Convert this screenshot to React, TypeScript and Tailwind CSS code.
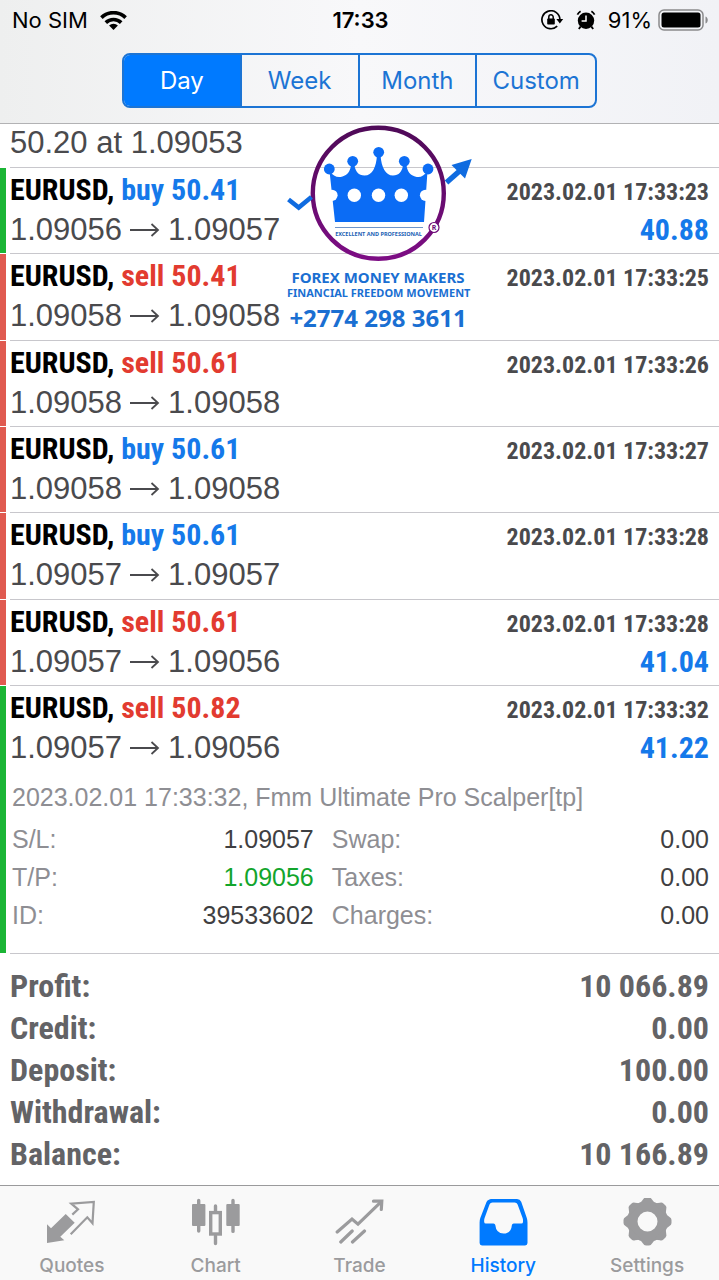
import React, { useState } from 'react'
import clsx from 'clsx'

type Side = 'buy' | 'sell'

interface Deal {
  id: number
  side: Side
  volume: string
  open: string
  close: string
  time: string
  profit?: string
  bar: 'green' | 'red'
}

const deals: Deal[] = [
  { id: 1, side: 'buy', volume: '50.41', open: '1.09056', close: '1.09057', time: '2023.02.01 17:33:23', profit: '40.88', bar: 'green' },
  { id: 2, side: 'sell', volume: '50.41', open: '1.09058', close: '1.09058', time: '2023.02.01 17:33:25', bar: 'red' },
  { id: 3, side: 'sell', volume: '50.61', open: '1.09058', close: '1.09058', time: '2023.02.01 17:33:26', bar: 'red' },
  { id: 4, side: 'buy', volume: '50.61', open: '1.09058', close: '1.09058', time: '2023.02.01 17:33:27', bar: 'red' },
  { id: 5, side: 'buy', volume: '50.61', open: '1.09057', close: '1.09057', time: '2023.02.01 17:33:28', bar: 'red' },
  { id: 6, side: 'sell', volume: '50.61', open: '1.09057', close: '1.09056', time: '2023.02.01 17:33:28', profit: '41.04', bar: 'red' },
  { id: 7, side: 'sell', volume: '50.82', open: '1.09057', close: '1.09056', time: '2023.02.01 17:33:32', profit: '41.22', bar: 'green' },
]

const summary = [
  ['Profit:', '10 066.89'],
  ['Credit:', '0.00'],
  ['Deposit:', '100.00'],
  ['Withdrawal:', '0.00'],
  ['Balance:', '10 166.89'],
]

const periods = ['Day', 'Week', 'Month', 'Custom']

const StatusBar = () => (
  <div className="grid h-10 grid-cols-[1fr_auto_1fr] items-center pr-2.5 pl-3 text-[22px] text-black">
    <div className="flex items-center gap-3">
      <span>No SIM</span>
      <svg width="27" height="19" viewBox="0 0 27 19" fill="none" stroke="#000" strokeWidth="3.6">
        <path d="M1.4 6.6a17.2 17.2 0 0 1 24.2 0" />
        <path d="M5.8 11.600a11 11 0 0 1 15.4 0" />
        <path d="M13.5 19l-4.4-4.4a6.2 6.2 0 0 1 8.8 0z" fill="#000" stroke="none" />
      </svg>
    </div>
    <span className="font-semibold">17:33</span>
    <div className="flex items-center justify-end">
      <svg className="mr-3" width="23" height="20" viewBox="0 0 23 20" fill="none" stroke="#000" strokeWidth="1.7">
        <path d="M16.2 16.2A9 9 0 1 1 18.9 9.2" />
        <path d="M15.4 9h6.8l-3.4 4.4z" fill="#000" stroke="none" />
        <rect x="6.2" y="8.6" width="7.6" height="6" rx="0.8" fill="#000" stroke="none" />
        <path d="M7.8 9V7a2.2 2.2 0 0 1 4.4 0v2" strokeWidth="1.5" />
      </svg>
      <svg className="mr-3" width="20" height="20" viewBox="0 0 20 20" fill="none">
        <circle cx="10" cy="10.8" r="8.2" fill="#000" />
        <path d="M1.4 4.600A10 10 0 0 1 4.600 1.2M15.4 1.2a10 10 0 0 1 3.200 3.4M4.600 16.6L2.8 19M15.4 16.6l1.8 2.4" stroke="#000" strokeWidth="1.800" />
        <path d="M10 5.4v5.6H5.6" stroke="#fff" strokeWidth="1.5" />
      </svg>
      <span className="mr-1.5">91%</span>
      <svg width="51" height="22" viewBox="0 0 51 22" fill="none">
        <rect x="1" y="1" width="44" height="20" rx="5" stroke="#8a8a8c" strokeWidth="1.5" />
        <rect x="3.5" y="3.5" width="39" height="15" rx="2.5" fill="#000" />
        <path d="M47.5 7.5c3 1 3 6 0 7z" fill="#8a8a8c" />
      </svg>
    </div>
  </div>
)

const Arrow = () => (
  <svg width="30" height="14" viewBox="0 0 30 14" fill="none" stroke="#4a4a4d" strokeWidth="1.8">
    <path d="M0 7h28M21.5 1l6.5 6-6.5 6" />
  </svg>
)

const DealRow = ({ deal, children }: { deal: Deal; children?: React.ReactNode }) => (
  <li className={clsx('flex min-h-[86px]', !children && 'grow')}>
    <div className={clsx('mb-px w-1.5 shrink-0', deal.bar === 'green' ? 'bg-[#1bb535]' : 'bg-[#e05a50]')} />
    <div className="ml-1 grow border-b border-[#c8c7cc] pt-0.5 pr-2.5">
      <div className="flex h-10 items-baseline justify-between font-['Roboto_Condensed','Roboto',sans-serif] leading-10 font-bold">
        <span className="text-[30px] text-black">
          EURUSD,{' '}
          <span className={deal.side === 'buy' ? 'text-[#1579ea]' : 'text-[#e23b30]'}>
            {deal.side} {deal.volume}
          </span>
        </span>
        <time className="text-[24px] text-[#4a4a4d]">{deal.time}</time>
      </div>
      <div className="flex h-10 items-baseline justify-between leading-10">
        <span className="flex items-center gap-2 text-[31px] text-[#4a4a4d]">
          {deal.open}
          <Arrow />
          {deal.close}
        </span>
        {deal.profit && (
          <span className="font-['Roboto_Condensed','Roboto',sans-serif] text-[30px] font-bold text-[#1579ea]">{deal.profit}</span>
        )}
      </div>
      {children}
    </div>
  </li>
)

const Detail = ({ label, value, green }: { label: string; value: string; green?: boolean }) => (
  <div className="flex justify-between">
    <dt className="text-[#8e8e93]">{label}</dt>
    <dd className={green ? 'text-[#12a52c]' : 'text-[#3f3f42]'}>{value}</dd>
  </div>
)

const Watermark = () => (
  <div className="pointer-events-none absolute top-0 left-[287px] w-[182px] text-center font-['Noto_Sans',sans-serif] font-bold whitespace-nowrap text-[#1a6fd2]">
    <svg className="overflow-visible" width="182" height="144" viewBox="0 0 182 144" fill="none">
      <defs>
        <linearGradient id="ring" x1="0" y1="0" x2="0" y2="1">
          <stop offset="0" stopColor="#4f0a58" />
          <stop offset="1" stopColor="#7d0d84" />
        </linearGradient>
      </defs>
      <circle cx="91.3" cy="69.3" r="65.5" stroke="url(#ring)" strokeWidth="4.4" />
      <path d="M1.5 75.5l10.2 8L24.5 73" stroke="#0f6be0" strokeWidth="4.6" />
      <path d="M159.5 58.5L176 44" stroke="#0f6be0" strokeWidth="5.4" />
      <path d="M184.7 35l-20.2 6 13.5 13.4z" fill="#0f6be0" />
      <g fill="#0b6cf5">
        <circle cx="42.3" cy="45" r="5.4" />
        <circle cx="65.7" cy="37.3" r="5.4" />
        <circle cx="91.7" cy="28.3" r="5.4" />
        <circle cx="117.3" cy="37.3" r="5.4" />
        <circle cx="141" cy="45" r="5.4" />
        <path d="M42.5 47c4 5.5 8 7 13 5.5 5-1.500 7.5-5 8.5-11h3.5c1 6 4 10 10 10 8 0 11.500-8 12.500-20h3.500c1 12 5 20 12.500 20 6 0 9-4 10-10h3.500c1 6 3.5 9.5 8.5 11 5 1.5 8.5 0 12.500-5.500L137 98H48z" />
      </g>
      <g fill="#fff">
        <circle cx="45" cy="71.3" r="5.6" />
        <circle cx="67.3" cy="71.3" r="6.7" />
        <circle cx="91.5" cy="71.3" r="6.7" />
        <circle cx="114.3" cy="71.3" r="6.7" />
        <circle cx="138.5" cy="71.3" r="5.6" />
      </g>
      <path d="M48 103.5h88" stroke="#6f95c9" />
      <text x="91.5" y="112" textAnchor="middle" fontSize="5.5" fill="#1a5fb4">EXCELLENT AND PROFESSIONAL</text>
      <circle cx="147" cy="103.5" r="5" fill="#fff" stroke="#6d0a78" strokeWidth="1.2" />
      <text x="147" y="106" textAnchor="middle" fontSize="7" fill="#6d0a78">R</text>
    </svg>
    <p className="text-[15px] leading-[18px]">FOREX MONEY MAKERS</p>
    <p className="text-[11px] leading-[14px]">FINANCIAL FREEDOM MOVEMENT</p>
    <p className="text-[24px] leading-9">+2774 298 3611</p>
  </div>
)

const QuotesIcon = () => (
  <svg width="49" height="48" viewBox="0 0 49 48" fill="none">
    <path d="M0 26.3l4 4L18.7 16l9 8.7-14.4 14 4 3.6L0 45z" fill="currentColor" />
    <path d="M25.3 16.600l5.700-5.300-6.700-5.600 22.500-1.800-1.300 21.300-5.200-5.900-16.600 17" stroke="currentColor" strokeWidth="2.200" />
  </svg>
)

const ChartIcon = () => (
  <svg width="49" height="48" viewBox="0 0 49 48" fill="none" stroke="currentColor" strokeWidth="3.4" strokeLinecap="round">
    <path d="M7.7 2.4V33M42 2.4v31M24.5 8v5M24.5 38v7.5" />
    <rect x="1" y="6" width="13.4" height="22" rx="1" fill="currentColor" stroke="none" />
    <rect x="35.3" y="6" width="13.4" height="22" rx="1" fill="currentColor" stroke="none" />
    <rect x="19.7" y="14.6" width="9.6" height="21.4" />
  </svg>
)

const TradeIcon = () => (
  <svg width="49" height="48" viewBox="0 0 49 48" fill="none" stroke="currentColor" strokeWidth="3.2" strokeLinecap="round">
    <path d="M2.2 34L17 21l6 5.2L45.5 4.4M5.8 44l11.4-11M17.5 44l12-11" />
    <path d="M38.500 3.200h8.300l-.5 8.300" />
  </svg>
)

const HistoryIcon = () => (
  <svg width="49" height="48" viewBox="0 0 49 48" fill="currentColor">
    <path
      fillRule="evenodd"
      d="M10 1.800Q10.800 1 12 1h26q3 0 4.200 2.800L47.800 20q.7 2 .7 4.500V45q0 2.400-2.400 2.400H3Q.600 47.400.600 45V24.500Q.600 22 1.300 20L7.500 4Q8.300 2.400 10 1.800zM13.500 4.600q-2.200 0-3 2L5.600 20q-.6 1.600-.4 4 .1 1.500 1.600 1.500h7.700q1.500 0 1.800 1.500 .8 8.500 8.300 8.500t8.300-8.500q.3-1.500 1.800-1.500h7.700q1.500 0 1.600-1.500 .2-2.400-.4-4L38.600 6.600q-.8-2-3-2z"
    />
  </svg>
)

const SettingsIcon = () => (
  <svg width="49" height="48" viewBox="0 0 49 48" fill="none">
    <circle cx="24.5" cy="23.5" r="15.2" stroke="currentColor" strokeWidth="10.400" />
    <g fill="currentColor">
      {[0, 45, 90, 135, 180, 225, 270, 315].map(angle => (
        <path key={angle} d="M16.500 6L20 1.500Q21 -.500 23 -.500H26Q28 -.500 29 1.500L32.500 6z" transform={`rotate(${angle} 24.5 23.5)`} />
      ))}
    </g>
  </svg>
)

const tabs = [
  { label: 'Quotes', Icon: QuotesIcon },
  { label: 'Chart', Icon: ChartIcon },
  { label: 'Trade', Icon: TradeIcon },
  { label: 'History', Icon: HistoryIcon },
  { label: 'Settings', Icon: SettingsIcon },
]

const App = () => {
  const [period, setPeriod] = useState('Day')
  const [tab, setTab] = useState('History')

  return (
    <div className="flex min-h-screen flex-col bg-white font-['Liberation_Sans',sans-serif]">
      <header className="border-b border-[#b2b2b4] bg-linear-to-r from-[#eeefef] via-[#f8f8fa] to-[#f1f2f6] font-['Inter',sans-serif]">
        <StatusBar />
        <div className="px-[122px] pt-[13px] pb-[15px]">
          <div className="grid h-[55px] grid-cols-4 divide-x-2 divide-[#1c74d4] overflow-hidden rounded-lg border-2 border-[#1c74d4]">
            {periods.map(p => (
              <button
                key={p}
                onClick={() => setPeriod(p)}
                className={clsx('text-[24px]', period === p ? 'bg-[#007aff] text-white' : 'text-[#1c74d4]')}
              >
                {p}
              </button>
            ))}
          </div>
        </div>
      </header>

      <main className="relative flex grow flex-col">
        <p className="ml-2.5 h-11 border-b border-[#c8c7cc] text-[31px] leading-[38px] text-[#4a4a4d]">50.20 at 1.09053</p>

        <ul className="flex grow flex-col">
          {deals.map(deal => (
            <DealRow key={deal.id} deal={deal}>
              {deal.id === 7 && (
                <div className="pt-2.5 pb-[19px] pl-0.5 text-[25px] leading-[38px]">
                  <p className="mb-1 text-[#8e8e93]">2023.02.01 17:33:32, Fmm Ultimate Pro Scalper[tp]</p>
                  <dl className="grid grid-cols-[4fr_5fr] gap-x-[18px]">
                    <Detail label="S/L:" value="1.09057" />
                    <Detail label="Swap:" value="0.00" />
                    <Detail label="T/P:" value="1.09056" green />
                    <Detail label="Taxes:" value="0.00" />
                    <Detail label="ID:" value="39533602" />
                    <Detail label="Charges:" value="0.00" />
                  </dl>
                </div>
              )}
            </DealRow>
          ))}
        </ul>

        <dl className="px-2.5 pt-[11px] pb-2.5 font-['Roboto_Condensed','Roboto',sans-serif] text-[32px] leading-[42px] font-bold text-[#636366]">
          {summary.map(([label, value]) => (
            <div key={label} className="flex justify-between">
              <dt>{label}</dt>
              <dd>{value}</dd>
            </div>
          ))}
        </dl>

        <Watermark />
      </main>

      <nav className="grid grid-cols-5 border-t border-[#9a9a9c] bg-[#f9f9f9] pt-3 pb-0.5 font-['Inter',sans-serif]">
        {tabs.map(({ label, Icon }) => (
          <button
            key={label}
            onClick={() => setTab(label)}
            className={clsx('flex flex-col items-center gap-2', tab === label ? 'text-[#007aff]' : 'text-[#9b9b9d]')}
          >
            <Icon />
            <span className="text-[19px] leading-6 font-medium">{label}</span>
          </button>
        ))}
      </nav>
    </div>
  )
}

export default App
